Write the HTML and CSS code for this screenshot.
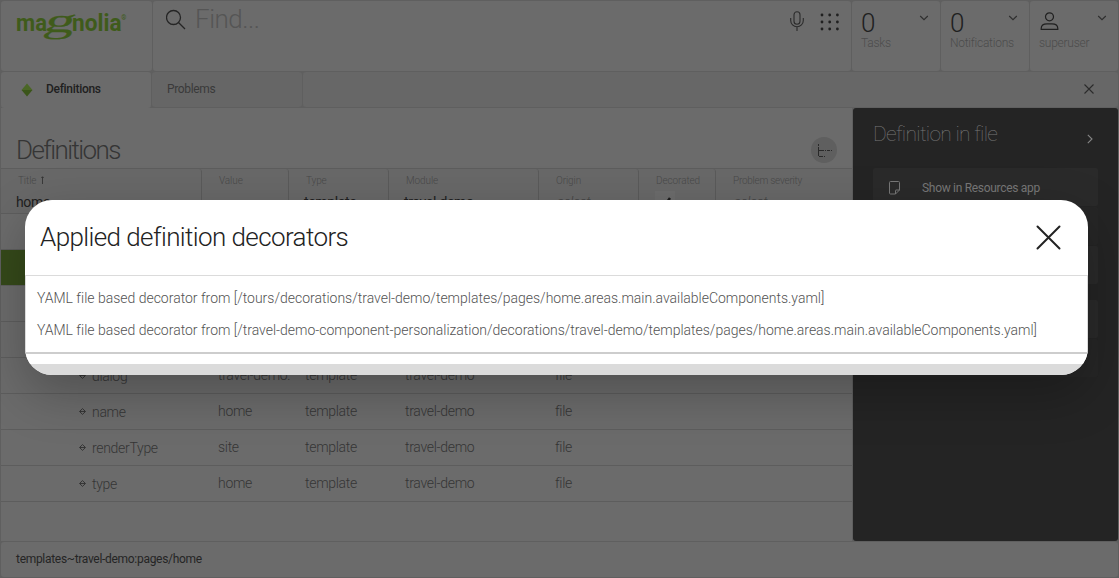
FILE: index.html
```html
<!DOCTYPE html>
<html lang="en">
<head>
<meta charset="utf-8">
<title>Magnolia - Definitions</title>
<link rel="stylesheet" href="styles.css">
</head>
<body>
<svg class="defs" width="0" height="0">
  <symbol id="node" viewBox="0 0 7 7"><path d="M1 3 3.500.6 6 3M1 4 3.500 6.400 6 4M.2 3.500h6.600" fill="none" stroke="#303030" stroke-width=".9"/></symbol>
  <symbol id="chevron" viewBox="0 0 10 6"><path d="M1.200 1 5 4.700 8.800 1" fill="none" stroke="#2e2e2e" stroke-width="1.100"/></symbol>
</svg>
<div class="app">
  <header class="topbar">
    <div class="cell brand">
      <svg width="114" height="34" viewBox="0 0 114 34" fill="#3f5b1b" class="logo">
        <text x="0" y="20.500" class="sans" textLength="31" lengthAdjust="spacingAndGlyphs">ma</text>
        <text transform="translate(26.500 22) skewX(-16) scale(1.800 1)" class="serif">g</text>
        <text x="56" y="20.500" class="sans" textLength="49.500" lengthAdjust="spacingAndGlyphs">nolia</text>
        <text x="105.300" y="10" class="reg">®</text>
      </svg>
    </div>
    <div class="cell find">
      <svg width="22" height="22" viewBox="0 0 22 22" fill="none" stroke="#252525" stroke-width="1.300"><circle cx="7.500" cy="8.500" r="7"/><path d="m12.500 13.500 6.500 6.500"/></svg>
      <span class="placeholder">Find...</span>
      <svg class="mic" width="14" height="20" viewBox="0 0 14 20" fill="none" stroke="#2b2b2b" stroke-width="1.100"><rect x="4" y=".8" width="6" height="12.500" rx="3"/><path d="M.7 7v2.500a6.300 6.300 0 0 0 12.600 0V7M7 16v4"/></svg>
      <svg class="grid" width="20" height="20" viewBox="0 0 20 20" fill="#202020"><circle cx="2" cy="2" r="1.400"/><circle cx="9.700" cy="2" r="1.400"/><circle cx="17.400" cy="2" r="1.400"/><circle cx="2" cy="9" r="1.400"/><circle cx="9.700" cy="9" r="1.400"/><circle cx="17.400" cy="9" r="1.400"/><circle cx="2" cy="16" r="1.400"/><circle cx="9.700" cy="16" r="1.400"/><circle cx="17.400" cy="16" r="1.400"/></svg>
    </div>
    <div class="cell stat"><div class="row"><span class="num">0</span><svg class="chev" width="10" height="6"><use href="#chevron"/></svg></div><span class="cap">Tasks</span></div>
    <div class="cell stat"><div class="row"><span class="num">0</span><svg class="chev" width="10" height="6"><use href="#chevron"/></svg></div><span class="cap">Notifications</span></div>
    <div class="cell stat"><div class="row"><svg class="user" width="19" height="19" viewBox="0 0 19 19" fill="none" stroke="#202020" stroke-width="1.200"><circle cx="9.500" cy="4.800" r="4"/><path d="M1.200 17.400v-1c0-3.200 2.800-4.600 5.800-4.600h5c3 0 5.800 1.400 5.800 4.600v1z"/></svg><svg class="chev" width="10" height="6"><use href="#chevron"/></svg></div><span class="cap">superuser</span></div>
  </header>
  <nav class="tabs">
    <div class="tab active"><svg width="12" height="14" viewBox="0 0 12 14"><path d="M.5 7 6 .5 11.500 7z" fill="#4b6726"/><path d="M.5 7h11L6 13.500z" fill="#3b551a"/></svg><span>Definitions</span></div>
    <div class="tab">Problems</div>
    <div class="rest"><svg width="10" height="10" viewBox="0 0 10 10" stroke="#2b2b2b" stroke-width="1.100"><path d="m.5.5 9 9m0-9-9 9"/></svg></div>
  </nav>
  <main class="main">
    <section class="content">
      <div class="titlebar"><h1>Definitions</h1>
        <div class="treebtn"><svg width="16" height="16" viewBox="0 0 16 16" stroke="#292929" fill="none"><path d="M1.500 2v2m0 1v9M2 8.500h5m1 0h1m1 0h3m1 0h1M2 14.500h4m1 0h1"/></svg></div>
      </div>
      <div class="grid-row head">
        <div><small>Title <svg width="5" height="8" viewBox="0 0 5 8" fill="none" stroke="#343434" stroke-width=".9"><path d="M1.500 8V.8M.3 2 1.500.8 2.700 2"/></svg></small><b>home</b></div>
        <div><small>Value</small></div>
        <div><small>Type</small><b>template</b></div>
        <div><small>Module</small><b>travel-demo</b></div>
        <div><small>Origin</small><i>select</i></div>
        <div><small>Decorated</small><svg class="check" width="20" height="16" viewBox="0 0 20 16"><path fill="#6c6c6c" d="M0 0h20v16H0z"/><path d="m7 11 3 3 5-7" fill="none" stroke="#1c1c1c" stroke-width="2.500"/></svg></div>
        <div><small>Problem severity</small><i>select</i></div>
      </div>
      <div class="grid-row"></div>
      <div class="grid-row selected"></div>
      <div class="grid-row"></div>
      <div class="grid-row"></div>
      <div class="grid-row"><span class="name"><svg width="7" height="7"><use href="#node"/></svg>dialog</span><span>travel-demo:</span><span>template</span><span>travel-demo</span><span>file</span></div>
      <div class="grid-row"><span class="name"><svg width="7" height="7"><use href="#node"/></svg>name</span><span>home</span><span>template</span><span>travel-demo</span><span>file</span></div>
      <div class="grid-row"><span class="name"><svg width="7" height="7"><use href="#node"/></svg>renderType</span><span>site</span><span>template</span><span>travel-demo</span><span>file</span></div>
      <div class="grid-row"><span class="name"><svg width="7" height="7"><use href="#node"/></svg>type</span><span>home</span><span>template</span><span>travel-demo</span><span>file</span></div>
    </section>
    <aside class="panel">
      <div class="panel-title"><h2>Definition in file</h2><svg width="6" height="10" viewBox="0 0 6 10" fill="none" stroke="#858585" stroke-width="1.100"><path d="m.8.8 4.200 4.200L.8 9.200"/></svg></div>
      <div class="action"><svg width="11" height="14" viewBox="0 0 11 14" fill="none" stroke="#777"><path d="M1.500.5h8a1 1 0 0 1 1 1V9L6.500 13h-5a1 1 0 0 1-1-1V1.500a1 1 0 0 1 1-1zM6.500 13V9.500a.5.5 0 0 1 .5-.5h3.500"/></svg><span>Show in Resources app</span></div>
      <div class="action dim"></div>
      <div class="action"></div>
      <div class="action gap"></div>
      <div class="action dim"></div>
    </aside>
  </main>
  <footer class="status">templates~travel-demo:pages/home</footer>
</div>
<div class="dialog">
  <div class="dialog-head"><h3>Applied definition decorators</h3><svg width="25" height="25" viewBox="0 0 25 25" stroke="#222" stroke-width="2"><path d="m1.500 1.500 22 22M23.500 1.500l-22 22" stroke-linecap="round"/></svg></div>
  <div class="dialog-body">
    <p>YAML file based decorator from [/tours/decorations/travel-demo/templates/pages/home.areas.main.availableComponents.yaml]</p>
    <p>YAML file based decorator from [/travel-demo-component-personalization/decorations/travel-demo/templates/pages/home.areas.main.availableComponents.yaml]</p>
  </div>
  <div class="dialog-foot"></div>
</div>
</body>
</html>
```
FILE: styles.css
```css
* { box-sizing: border-box; }
body { margin: 0; width: 1119px; height: 578px; overflow: hidden; background: #5f5f5f; font-family: Roboto, sans-serif; font-weight: 300; color: #353535; }
h1, h2, h3, p { margin: 0; font-weight: 300; white-space: nowrap; }
svg { flex: none; display: block; }
.defs { position: absolute; }
.app { height: 578px; padding: 1px; display: flex; flex-direction: column; gap: 1px; }
.topbar { height: 70px; display: grid; grid-template-columns: 151px 698px 88px 88px 88px; gap: 1px; }
.cell { background: #6b6b6b; border-radius: 3px; }
.brand { padding: 9px 0 0 15px; }
.logo { overflow: visible; }
.sans { font: 700 24.500px Roboto, sans-serif; }
.serif { font: 400 34px "Liberation Serif", serif; stroke: #3f5b1b; stroke-width: .2px; }
.reg { font: 700 6.500px Roboto, sans-serif; }
.find { display: flex; padding: 8px 12px 0 13px; align-items: flex-start; }
.placeholder { font-size: 26px; line-height: 30px; color: #555; margin: -5px 0 0 7px; flex: 1; letter-spacing: -.5px; }
.mic { margin: 2px 16px 0 0; }
.grid { margin: 4px -1px 0 0; }
.stat { padding: 7px 9px 0 9px; }
.stat .row { display: flex; justify-content: space-between; height: 28px; }
.num { font-size: 26px; line-height: 31px; color: #202020; }
.chev { margin: 7px 2px 0 0; }
.user { margin: 4px 0 0 1px; }
.cap { display: block; font-size: 12px; line-height: 14px; color: #4c4c4c; letter-spacing: -.25px; }
.tabs { height: 35px; display: grid; grid-template-columns: 150px 150px 1fr; gap: 1px; }
.tab { background: #666; border-radius: 3px; height: 35px; font-size: 12px; line-height: 34px; padding-left: 15px; font-weight: 400; color: #3a3a3a; letter-spacing: -.35px; }
.tab.active { background: #6b6b6b; height: 36px; display: flex; color: #202020; font-weight: 500; padding-left: 20px; letter-spacing: -.3px; }
.tab.active svg { margin: 11px 13px 0 0; }
.rest { background: #676767; border-radius: 3px; height: 35px; padding: 12px 24px 0 0; display: flex; justify-content: flex-end; }
.main { height: 433px; display: grid; grid-template-columns: 851px 265px; gap: 1px; }
.content { background: #6b6b6b; overflow: hidden; }
.titlebar { height: 60px; display: flex; justify-content: space-between; padding: 26px 15px 0 15px; }
h1 { font-size: 26px; line-height: 32px; letter-spacing: -1.600px; color: #353535; }
.treebtn { width: 26px; height: 26px; border-radius: 50%; background: #5f5f5f; margin-top: 3px; padding: 5px 0 0 6px; }
.grid-row { height: 36px; border-bottom: 1px solid #5d5d5d; display: grid; grid-template-columns: 200px 87px 100px 150px 100px 77px 137px; font-size: 14px; line-height: 34px; white-space: nowrap; }
.grid-row > span { padding-left: 17px; letter-spacing: -.3px; }
.grid-row > .name { display: flex; padding: 1px 0 0 78px; }
.name svg { margin: 13px 6px 0 0; }
.head { height: 46px; grid-template-columns: 201px 87px 100px 150px 100px 77px 136px; border-top: 1px solid #5d5d5d; background: #686868; }
.head > div { border-right: 1px solid #5a5a5a; border-radius: 3px; padding: 6px 0 0 17px; line-height: 12px; overflow: hidden; }
.head small { display: flex; gap: 5px; font-size: 10px; line-height: 12px; color: #484848; letter-spacing: -.1px; }
.head > div:last-child { border-right: 0; }
.head > div:last-child small { letter-spacing: -.25px; }
.head small svg { margin-top: 1px; }
.head b, .head i { display: block; font-size: 14px; line-height: 16px; margin-top: 7px; margin-left: -2px; font-weight: 400; color: #202020; letter-spacing: -.35px; }
.head i { color: #444; font-weight: 300; margin-left: 1px; }
.check { margin: 4px 0 0 -1px; }
.selected { background: #35491a; }
.panel { background: #242424; border-radius: 3px; padding: 0 20px; }
.panel-title { height: 60px; display: flex; justify-content: space-between; }
h2 { font-size: 21px; line-height: 53px; font-weight: 100; color: #777; letter-spacing: -.7px; }
.panel-title svg { margin: 26px 5px 0 0; }
.action { height: 38px; background: #2a2a2a; border-radius: 2px; margin-bottom: 1px; display: flex; padding-left: 16px; font-size: 12px; line-height: 40px; font-weight: 400; color: #777; letter-spacing: -.3px; }
.action svg { margin: 13px 22px 0 0; }
.action.dim { background: #262626; }
.action.gap { margin-top: 16px; }
.status { height: 35px; background: #6b6b6b; border-radius: 3px; padding-left: 15px; font-size: 12px; line-height: 34px; font-weight: 400; color: #252525; letter-spacing: -.3px; }
.dialog { position: absolute; left: 25px; top: 200px; width: 1063px; height: 175px; border-radius: 27px; background: #fff; overflow: hidden; box-shadow: 0 18px 50px rgba(0,0,0,.25); }
.dialog-head { height: 76px; border-bottom: 1px solid #dbdbdb; display: flex; justify-content: space-between; padding: 22px 27px 0 15px; }
.dialog-head svg { margin-top: 3px; }
h3 { font-size: 26px; line-height: 30px; letter-spacing: -.600px; color: #222; }
.dialog-body { height: 78px; border: solid #dbdbdb; border-width: 0 1px 2px; border-bottom-color: #cdcdcd; padding: 6px 0 0 11px; color: #535353; font-size: 14px; line-height: 32px; letter-spacing: -.008px; }
.dialog-foot { height: 21px; border-top: 10px solid #fff; background: #dbdbdb; }
```
